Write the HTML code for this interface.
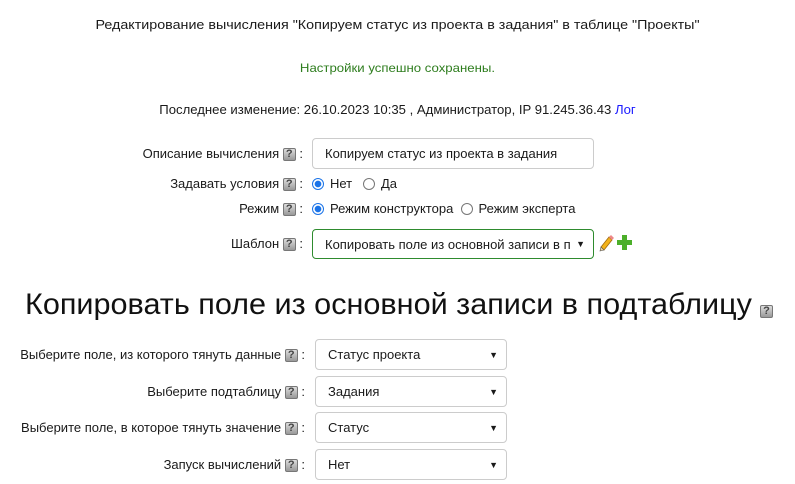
<!DOCTYPE html>
<html><head><meta charset="utf-8"><style>
body{margin:0;width:795px;height:484px;background:#fff;font-family:"Liberation Sans","DejaVu Sans",sans-serif;color:#1a1a1a;position:relative;overflow:hidden;font-size:13px}
.a{position:absolute;white-space:nowrap}
.c{left:0;width:795px;text-align:center}
.r{text-align:right}
.h{display:inline-block;width:13px;height:13px;border:1px solid #777;border-radius:2px;background:linear-gradient(#ddd,#999);color:#444;font-size:11px;font-weight:bold;text-align:center;vertical-align:middle;box-sizing:border-box;line-height:11px}
.box{position:absolute;box-sizing:border-box;border:1px solid #ccc;border-radius:4px;background:#fff;padding-left:12px;font-size:13px;color:#1a1a1a;display:flex;align-items:center}
.arr{position:absolute;right:8px;font-size:9px;top:50%;transform:translateY(-50%)}
.rad{display:inline-block;width:12px;height:12px;border-radius:50%;border:1px solid #777;box-sizing:border-box;vertical-align:-2px;margin-right:6px}
.on{border:1px solid #1a73e8;background:radial-gradient(circle,#1a73e8 3px,#fff 3.6px)}
</style></head><body>
<div class="a c" style="top:17px;transform:scaleX(1.10)">Редактирование вычисления "Копируем статус из проекта в задания" в таблице "Проекты"</div>
<div class="a c" style="top:61px;color:#2e7d1e;font-size:12px;transform:scaleX(1.1)">Настройки успешно сохранены.</div>
<div class="a c" style="top:103px;font-size:12.5px;transform:scaleX(1.05)">Последнее изменение: 26.10.2023 10:35 , Администратор, IP 91.245.36.43 <span style="color:#1a1aff">Лог</span></div>

<div class="a r" style="right:492px;top:146px">Описание вычисления <span class="h">?</span> :</div>
<div class="box" style="left:312px;top:138px;width:282px;height:31px">Копируем статус из проекта в задания</div>
<div class="a r" style="right:492px;top:176px">Задавать условия <span class="h">?</span> :</div>
<div class="a" style="left:312px;top:176px"><span class="rad on"></span>Нет &nbsp;&nbsp;<span class="rad"></span>Да</div>
<div class="a r" style="right:492px;top:201px">Режим <span class="h">?</span> :</div>
<div class="a" style="left:312px;top:201px"><span class="rad on"></span>Режим конструктора &nbsp;<span class="rad"></span>Режим эксперта</div>
<div class="a r" style="right:492px;top:236px">Шаблон <span class="h">?</span> :</div>
<div class="box" style="left:312px;top:229px;width:282px;height:30px;border-color:#2e8b2e">Копировать поле из основной записи в п<span class="arr">▼</span></div>
<svg class="a" style="left:598px;top:234px" width="16" height="18" viewBox="0 0 16 18"><path d="M3 13 L11 3 L14 6 L6 16 Z" fill="#f2b21a" stroke="#a06a10" stroke-width=".8"/><path d="M11 3 L13 1 L16 4 L14 6Z" fill="#e88"/><path d="M3 13 L2 17 L6 16Z" fill="#f3d7a0" stroke="#555" stroke-width=".6"/></svg>
<svg class="a" style="left:617px;top:235px" width="15" height="15"><path d="M5 0h5v5h5v5h-5v5h-5v-5h-5v-5h5z" fill="#4caf2a"/></svg>

<div class="a" style="left:25px;top:288px;font-size:30px;color:#111;transform-origin:left;transform:scaleX(1.02)">Копировать поле из основной записи в подтаблицу</div>
<span class="a h" style="left:760px;top:305px">?</span>

<div class="a r" style="right:490px;top:347px">Выберите поле, из которого тянуть данные <span class="h">?</span> :</div>
<div class="box" style="left:315px;top:339px;width:192px;height:31px">Статус проекта<span class="arr">▼</span></div>
<div class="a r" style="right:490px;top:384px">Выберите подтаблицу <span class="h">?</span> :</div>
<div class="box" style="left:315px;top:376px;width:192px;height:31px">Задания<span class="arr">▼</span></div>
<div class="a r" style="right:490px;top:420px">Выберите поле, в которое тянуть значение <span class="h">?</span> :</div>
<div class="box" style="left:315px;top:412px;width:192px;height:31px">Статус<span class="arr">▼</span></div>
<div class="a r" style="right:490px;top:457px">Запуск вычислений <span class="h">?</span> :</div>
<div class="box" style="left:315px;top:449px;width:192px;height:31px">Нет<span class="arr">▼</span></div>
</body></html>
